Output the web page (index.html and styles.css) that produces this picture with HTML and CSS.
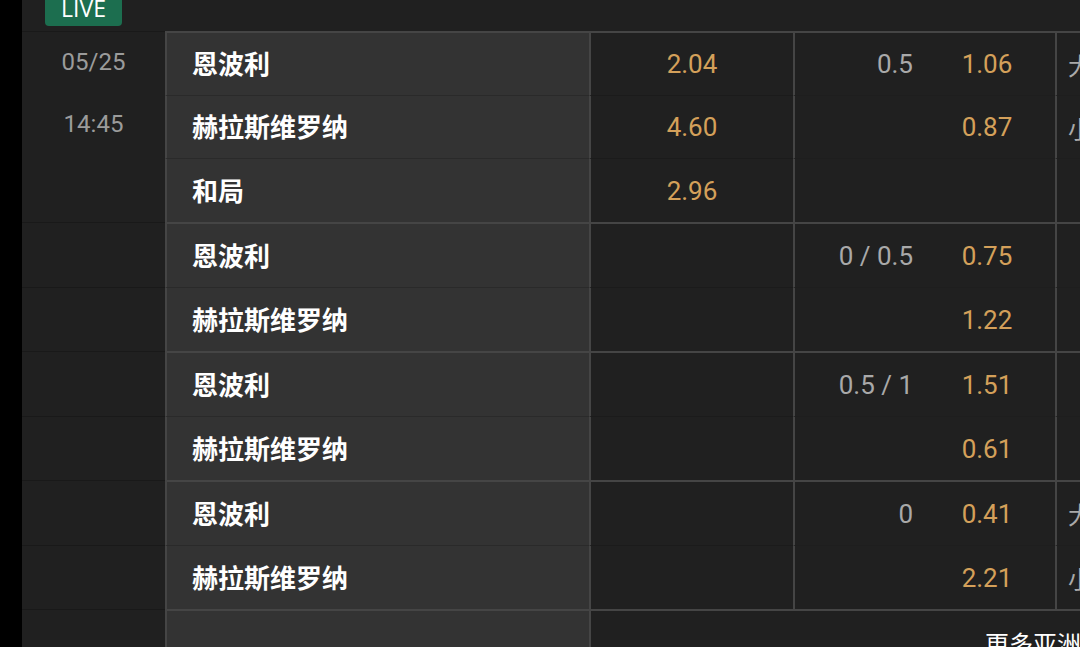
FILE: index.html
```html
<!DOCTYPE html>
<html lang="zh-CN">
<head>
<meta charset="utf-8">
<title>赛事赔率</title>
<link rel="stylesheet" href="styles.css">
</head>
<body>
<div class="screen">
  <div class="rail"></div>
  <div class="main">
    <div class="header"><span class="live">LIVE</span></div>

    <div class="market m3">
      <div class="date span3 first"><span>05/25</span><span>14:45</span></div>
      <div class="team first">恩波利</div>
      <div class="odd first">2.04</div>
      <div class="hdp first"><span class="line">0.5</span><span class="price">1.06</span></div>
      <div class="ou first">大</div>

      <div class="team">赫拉斯维罗纳</div>
      <div class="odd">4.60</div>
      <div class="hdp"><span class="line"></span><span class="price">0.87</span></div>
      <div class="ou">小</div>

      <div class="team">和局</div>
      <div class="odd">2.96</div>
      <div class="hdp"><span class="line"></span><span class="price"></span></div>
      <div class="ou"></div>
    </div>

    <div class="market m2">
      <div class="date first"></div>
      <div class="team first">恩波利</div>
      <div class="odd first"></div>
      <div class="hdp first"><span class="line">0 / 0.5</span><span class="price">0.75</span></div>
      <div class="ou first"></div>

      <div class="date"></div>
      <div class="team">赫拉斯维罗纳</div>
      <div class="odd"></div>
      <div class="hdp"><span class="line"></span><span class="price">1.22</span></div>
      <div class="ou"></div>
    </div>

    <div class="market m2">
      <div class="date first"></div>
      <div class="team first">恩波利</div>
      <div class="odd first"></div>
      <div class="hdp first"><span class="line">0.5 / 1</span><span class="price">1.51</span></div>
      <div class="ou first"></div>

      <div class="date"></div>
      <div class="team">赫拉斯维罗纳</div>
      <div class="odd"></div>
      <div class="hdp"><span class="line"></span><span class="price">0.61</span></div>
      <div class="ou"></div>
    </div>

    <div class="market m2">
      <div class="date first"></div>
      <div class="team first">恩波利</div>
      <div class="odd first"></div>
      <div class="hdp first"><span class="line">0</span><span class="price">0.41</span></div>
      <div class="ou first">大</div>

      <div class="date"></div>
      <div class="team">赫拉斯维罗纳</div>
      <div class="odd"></div>
      <div class="hdp"><span class="line"></span><span class="price">2.21</span></div>
      <div class="ou">小</div>
    </div>

    <div class="market more">
      <div class="date first"></div>
      <div class="team first"></div>
      <div class="more-link first">更多亚洲让球盘</div>
    </div>
  </div>
</div>
</body>
</html>
```

FILE: styles.css
```css
html, body {
  margin: 0;
  padding: 0;
  height: 647px;
  overflow: hidden;
  background: #202020;
}

* { box-sizing: border-box; }

.screen {
  display: flex;
  width: 1080px;
  height: 647px;
  font-family: Roboto, "Noto Sans CJK SC", sans-serif;
}

.rail {
  width: 22px;
  flex: none;
  background: #000;
}

.main {
  flex: 1;
  min-width: 0;
  overflow: hidden;
  background: #202020;
}

.header {
  height: 31px;
  display: flex;
  align-items: flex-start;
  padding-left: 23px;
}

.live {
  margin-top: -11px;
  width: 77px;
  height: 37px;
  line-height: 38px;
  text-align: center;
  background: #1c6e4f;
  color: #fff;
  font-family: "Open Sans", Roboto, sans-serif;
  font-size: 23px;
  border-radius: 0 0 4px 4px;
}

.market {
  display: grid;
  grid-template-columns: 143px 424px 204px 262px 1fr;
}

.m3 { grid-template-rows: 64px 63px 64px; }
.m2 { grid-template-rows: 65px 64px; }
.more { grid-template-rows: 64px; }

.date {
  border-top: 1px solid #191919;
  background: #202020;
}

.span3 {
  grid-row: span 3;
  display: flex;
  flex-direction: column;
  align-items: center;
  color: #9b9b9b;
  font-size: 24px;
}

.span3 span {
  line-height: 60px;
}

.span3 span + span {
  line-height: 64px;
}

.team {
  background: #333333;
  border-left: 2px solid #454545;
  border-top: 1px solid #2a2a2a;
  padding-left: 25px;
  padding-bottom: 3px;
  display: flex;
  align-items: center;
  color: #fff;
  font-size: 26px;
  font-weight: 700;
  font-family: "Noto Sans CJK SC", sans-serif;
}

.odd {
  border-left: 2px solid #454545;
  border-top: 1px solid #1b1b1b;
  display: flex;
  align-items: center;
  justify-content: center;
  color: #d4a05a;
  font-size: 26px;
}

.hdp {
  border-left: 2px solid #454545;
  border-top: 1px solid #1e1e1e;
  display: grid;
  grid-template-columns: 1fr 100px;
  column-gap: 24px;
  padding-right: 18px;
  align-items: center;
  font-size: 26px;
}

.line {
  text-align: right;
  color: #a9a9a9;
}

.price {
  text-align: center;
  color: #d4a05a;
}

.ou {
  border-left: 2px solid #454545;
  border-top: 1px solid #1e1e1e;
  padding-left: 11px;
  display: flex;
  align-items: center;
  color: #a9a9a9;
  font-size: 24px;
  font-family: "Noto Sans CJK SC", sans-serif;
  white-space: nowrap;
  overflow: hidden;
}

.team.first,
.odd.first,
.hdp.first,
.ou.first,
.more-link.first {
  border-top: 2px solid #454545;
}

.more-link {
  grid-column: span 3;
  border-left: 2px solid #454545;
  display: flex;
  align-items: center;
  padding-left: 394px;
  color: #fff;
  font-size: 24px;
  font-family: "Noto Sans CJK SC", sans-serif;
  white-space: nowrap;
  overflow: hidden;
}
```
